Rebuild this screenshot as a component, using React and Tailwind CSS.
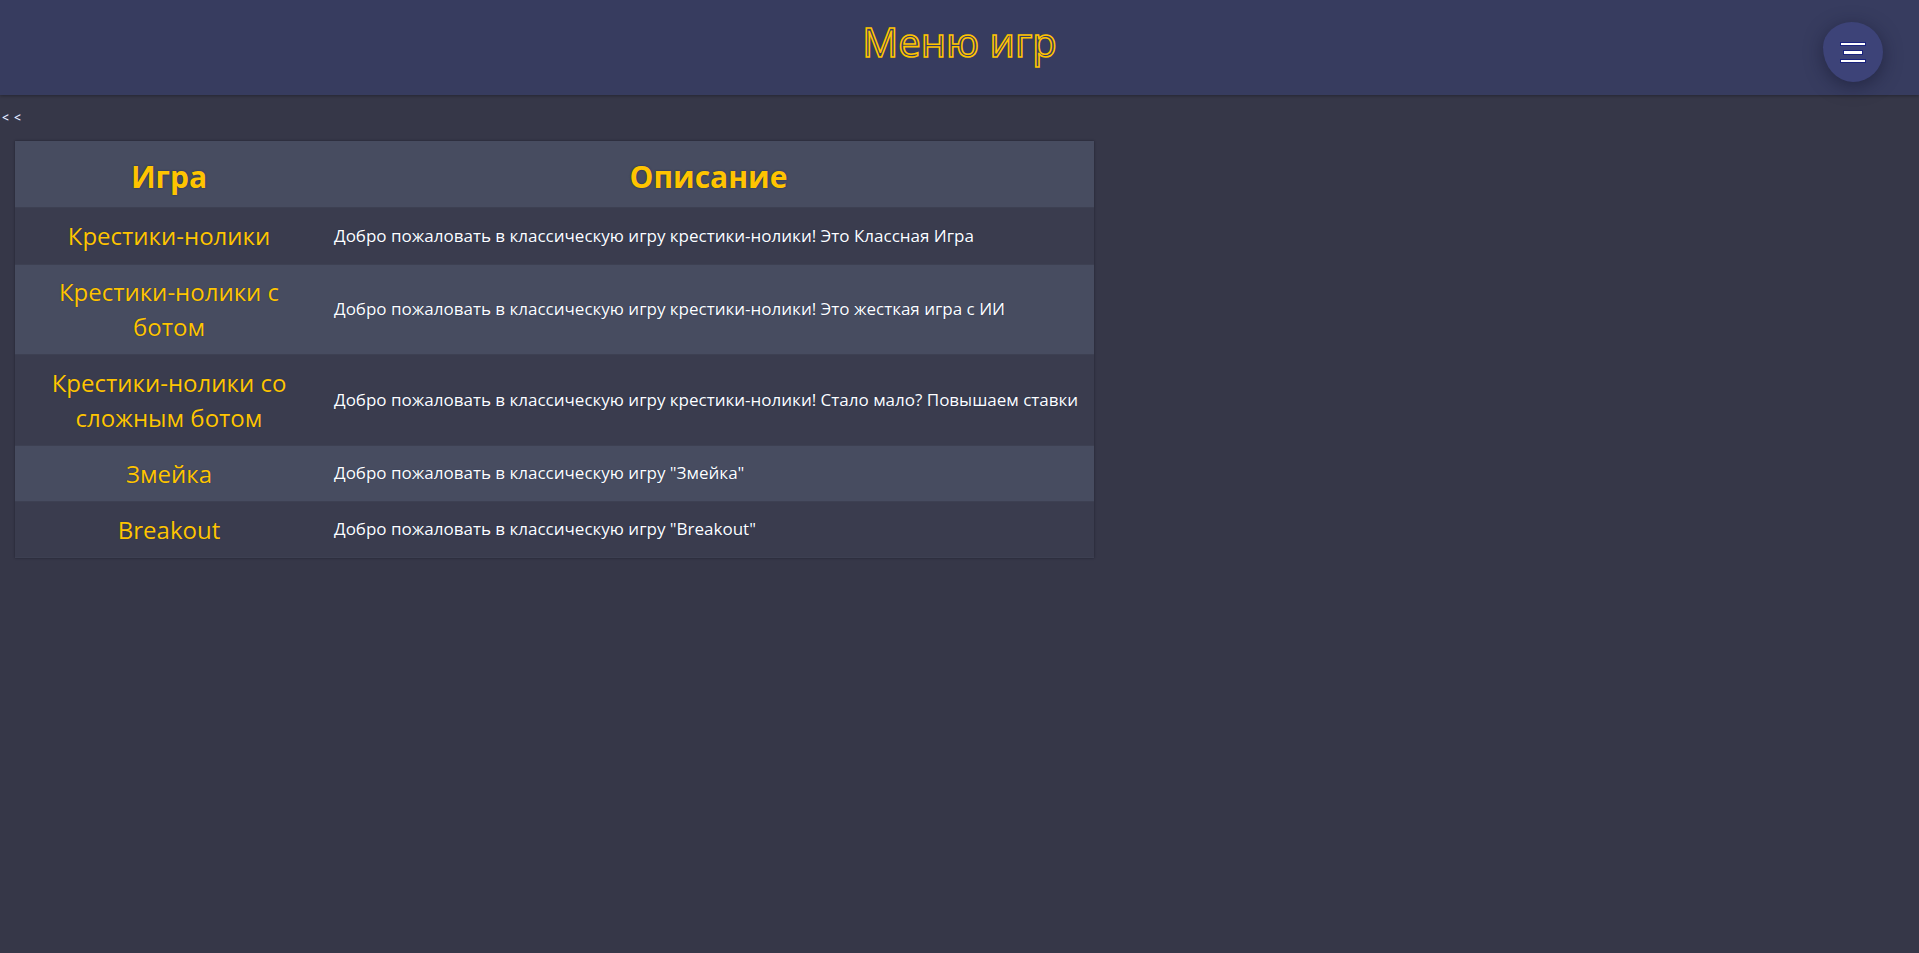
const games = [
  {
    name: "Крестики-нолики",
    desc: "Добро пожаловать в классическую игру крестики-нолики! Это Классная Игра",
    h: "h-[57px]",
  },
  {
    name: "Крестики-нолики с ботом",
    desc: "Добро пожаловать в классическую игру крестики-нолики! Это жесткая игра с ИИ",
    h: "h-[90px]",
  },
  {
    name: "Крестики-нолики со сложным ботом",
    desc: "Добро пожаловать в классическую игру крестики-нолики! Стало мало? Повышаем ставки",
    h: "h-[91px]",
  },
  {
    name: "Змейка",
    desc: 'Добро пожаловать в классическую игру "Змейка"',
    h: "h-[56px]",
  },
  {
    name: "Breakout",
    desc: 'Добро пожаловать в классическую игру "Breakout"',
    h: "h-[56px]",
  },
];

const MenuButton = () => (
  <button className="absolute right-[36px] top-[22px] w-[60px] h-[60px] flex flex-col items-center justify-center gap-[6px] bg-[#3d4378] rounded-[48%_52%_50%_50%/42%_50%_50%_58%] shadow-[0_4px_18px_rgba(20,22,45,0.55)]">
    <span className="block w-[24px] h-[2px] bg-white shadow-[0_0_0_1px_#1a237e]" />
    <span className="block w-[18px] h-[3px] bg-white shadow-[0_0_0_1px_#1a237e]" />
    <span className="block w-[24px] h-[2px] bg-white shadow-[0_0_0_1px_#1a237e]" />
  </button>
);

export default function App() {
  return (
    <div className="min-h-[953px] bg-[#363748] font-['Open_Sans','Noto_Sans',sans-serif]">
      {/* HEADER */}
      <header className="relative h-[95px] bg-[#373c5f] flex items-center justify-center shadow-[0_1px_3px_rgba(0,0,0,0.3)]">
        <h1 className="text-[40px] leading-none pb-[12px] text-[#373c5f] [-webkit-text-stroke:1.6px_#ffc400] [text-shadow:0_0_1px_#1a237e,0_0_1px_#1a237e]">
          Меню игр
        </h1>
        <MenuButton />
      </header>

      {/* BACK */}
      <button className="block mt-[17px] ml-[2px] text-[12px] leading-none tracking-[1px] text-white [text-shadow:0_0_1px_#5a7bd8]">
        &lt;&nbsp;&lt;
      </button>

      {/* TABLE */}
      <table className="ml-[15px] mt-[17px] w-[1079px] border-collapse shadow-[0_0_2px_rgba(20,20,30,0.6)]">
        <thead>
          <tr className="h-[66px] bg-[#474c60] border-b border-[#3d4052]">
            <th className="w-[308px] pt-[6px] text-[30px] font-bold text-[#ffc400] [text-shadow:0_0_2px_#1a2a50]">
              Игра
            </th>
            <th className="pt-[6px] text-[30px] font-bold text-[#ffc400] [text-shadow:0_0_2px_#1a2a50]">
              Описание
            </th>
          </tr>
        </thead>
        <tbody>
          {games.map((g, i) => (
            <tr
              key={g.name}
              className={`${g.h} border-b border-[#3d4052] ${
                i % 2 === 0 ? "bg-[#3a3c4e]" : "bg-[#474c60]"
              }`}
            >
              <td className="px-[14px] text-center text-[24px] leading-[35px] text-[#ffc400] [text-shadow:0_0_1px_#1a2a50]">
                {g.name}
              </td>
              <td className="pl-[11px] pr-[6px] text-[17px] text-white [text-shadow:0_0_1px_#1a2a50] whitespace-nowrap">
                {g.desc}
              </td>
            </tr>
          ))}
        </tbody>
      </table>
    </div>
  );
}
